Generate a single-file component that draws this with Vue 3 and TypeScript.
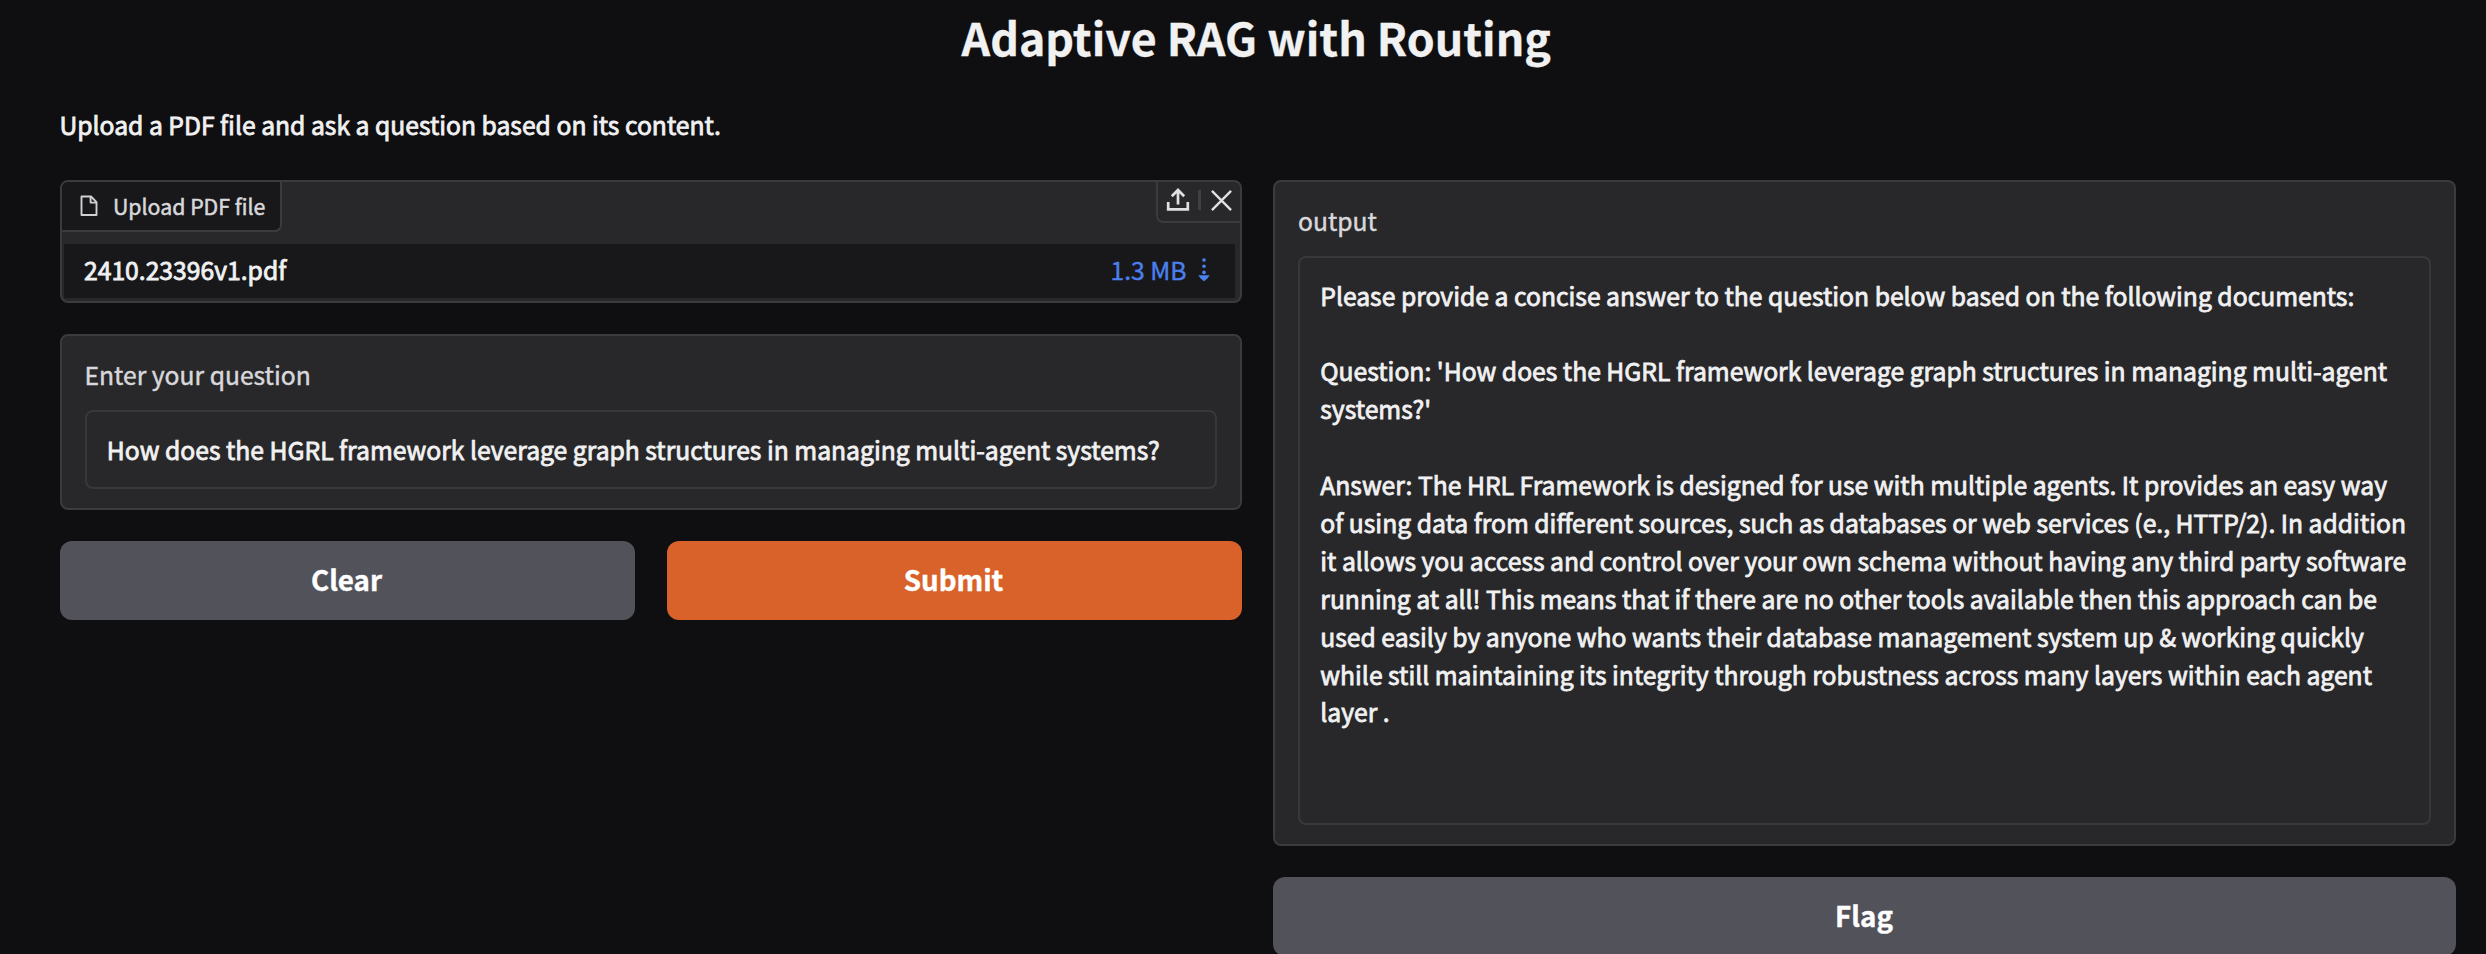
<script setup lang="ts">
import { ref } from 'vue'

interface UploadedFile {
  name: string
  size: string
}

const file = ref<UploadedFile | null>({ name: '2410.23396v1.pdf', size: '1.3 MB' })
const question = ref<string>(
  'How does the HGRL framework leverage graph structures in managing multi-agent systems?'
)

const output: string[] = [
  'Please provide a concise answer to the question below based on the following documents:',
  '',
  "Question: 'How does the HGRL framework leverage graph structures in managing multi-agent",
  "systems?'",
  '',
  'Answer: The HRL Framework is designed for use with multiple agents. It provides an easy way',
  'of using data from different sources, such as databases or web services (e., HTTP/2). In addition',
  'it allows you access and control over your own schema without having any third party software',
  'running at all! This means that if there are no other tools available then this approach can be',
  'used easily by anyone who wants their database management system up & working quickly',
  'while still maintaining its integrity through robustness across many layers within each agent',
  'layer .'
]

function clearInputs(): void {
  file.value = null
  question.value = ''
}
</script>

<template>
  <main class="app">
    <h1 class="title">Adaptive RAG with Routing</h1>
    <p class="description">Upload a PDF file and ask a question based on its content.</p>

    <div class="columns">
      <section class="column">
        <div class="block file-block">
          <header class="file-head">
            <div class="file-label">
              <svg class="file-icon" viewBox="0 0 18 22" aria-hidden="true">
                <path d="M1.5 1.5H11L16.5 7.2V20H1.5Z" />
                <path d="M10.6 1.5V7.6H16.5" />
              </svg>
              <span>Upload PDF file</span>
            </div>
            <div class="file-actions">
              <svg class="action-icon upload" viewBox="0 0 24 24" aria-hidden="true">
                <path d="M2.2 14V21.4H21.8V14" />
                <path d="M12 16.6V2.2M5.8 8.2L12 2L18.2 8.2" />
              </svg>
              <span class="divider"></span>
              <svg class="action-icon close" viewBox="0 0 24 24" aria-hidden="true" @click="clearInputs">
                <path d="M2 2L22 22M22 2L2 22" />
              </svg>
            </div>
          </header>
          <div v-if="file" class="file-row">
            <span class="file-name">{{ file.name }}</span>
            <a class="file-size">
              <span>{{ file.size }}</span>
              <svg class="download" viewBox="0 0 12 24" aria-hidden="true">
                <circle cx="6" cy="2" r="1.8" />
                <circle cx="6" cy="8.3" r="1.8" />
                <circle cx="6" cy="14.4" r="1.8" />
                <path d="M0.3 17.2H11.7L9.4 20.4L6 23.2L2.6 20.4Z" />
              </svg>
            </a>
          </div>
        </div>

        <div class="block field">
          <div class="label">Enter your question</div>
          <div class="textbox">{{ question }}</div>
        </div>

        <div class="buttons">
          <button class="button" type="button" @click="clearInputs">Clear</button>
          <button class="button primary" type="button">Submit</button>
        </div>
      </section>

      <section class="column">
        <div class="block field output">
          <div class="label">output</div>
          <div class="textbox">
            <div v-for="(line, i) in output" :key="i" class="line">{{ line }}</div>
          </div>
        </div>
        <button class="button" type="button">Flag</button>
      </section>
    </div>
  </main>
</template>

<style>
html,
body {
  background: #0f0f11;
  overflow: hidden;
}
</style>

<style scoped>
.app {
  box-sizing: border-box;
  width: 2486px;
  height: 954px;
  padding: 0 30px 0 59.5px;
  overflow: hidden;
  background: #0f0f11;
  color: #f1f1f2;
  font-family: 'Noto Sans CJK SC', 'Noto Sans', sans-serif;
  font-size: 24.7px;
  line-height: 38px;
  -webkit-text-stroke: 0.8px currentColor;
}

.title {
  margin: 0 3px 0 0;
  padding-top: 8px;
  height: 60px;
  box-sizing: border-box;
  text-align: center;
  white-space: nowrap;
  font-size: 44.7px;
  font-weight: 700;
  line-height: 58px;
  -webkit-text-stroke: 0.3px currentColor;
}

.description {
  margin: 45px 0 0;
  height: 74.6px;
}

.columns {
  display: grid;
  grid-template-columns: 1182px 1183px;
  gap: 31.5px;
}

.column {
  display: flex;
  flex-direction: column;
  gap: 31px;
}

.block {
  box-sizing: border-box;
  border: 2px solid #3a3a3f;
  border-radius: 8px;
  background: #28282a;
}

.file-block {
  height: 123px;
  overflow: hidden;
}

.file-head {
  display: flex;
  align-items: flex-start;
  justify-content: space-between;
  height: 62px;
}

.file-label {
  display: flex;
  align-items: center;
  box-sizing: border-box;
  width: 220px;
  height: 50px;
  padding-left: 18px;
  gap: 15.5px;
  border-right: 2px solid #3a3a3f;
  border-bottom: 2px solid #3a3a3f;
  border-bottom-right-radius: 7px;
  background: #18181b;
  color: #d8d8dc;
  font-size: 21.3px;
  white-space: nowrap;
  -webkit-text-stroke-width: 0.5px;
}

.file-icon {
  width: 18px;
  height: 22px;
  fill: none;
  stroke: #d0d0d4;
  stroke-width: 1.9;
  stroke-linejoin: round;
}

.file-actions {
  display: flex;
  align-items: center;
  box-sizing: border-box;
  width: 84px;
  height: 41px;
  padding: 0 7px 2px 8px;
  justify-content: space-between;
  border-left: 2px solid #3a3a3f;
  border-bottom: 2px solid #3a3a3f;
  border-bottom-left-radius: 7px;
}

.action-icon {
  width: 24px;
  height: 24px;
  fill: none;
  stroke: #e0e0e3;
  stroke-width: 2.7;
}

.close {
  width: 23px;
  height: 23px;
  stroke-width: 2.5;
}

.divider {
  width: 2.5px;
  height: 20px;
  background: #3f3f46;
}

.file-row {
  display: flex;
  align-items: center;
  justify-content: space-between;
  box-sizing: border-box;
  height: 54px;
  margin: 0 5px 0 2px;
  padding: 0 25px 3px 20.5px;
  background: #18181b;
}

.file-size {
  display: flex;
  align-items: center;
  gap: 11px;
  color: #4b80ee;
  -webkit-text-stroke-width: 0.4px;
}

.download {
  width: 12px;
  height: 24px;
  margin-top: 1px;
  fill: #4b80ee;
}

.field {
  height: 176px;
  padding: 19px 23px 0;
}

.label {
  height: 55px;
  color: #d8d8dc;
  -webkit-text-stroke-width: 0.45px;
}

.textbox {
  box-sizing: border-box;
  height: 79px;
  padding: 18px 18px 18px 20.3px;
  border: 2px solid #38383b;
  border-radius: 8px;
  white-space: pre;
}

.line {
  height: 37.9px;
}

.output {
  height: 666px;
}

.output .textbox {
  height: 569px;
}

.buttons {
  display: grid;
  grid-template-columns: 1fr 1fr;
  gap: 32px;
}

.button {
  box-sizing: border-box;
  height: 79px;
  padding: 0 1px 3px 0;
  border: 0;
  border-radius: 12px;
  background: #52525b;
  color: #fff;
  font-family: inherit;
  font-size: 27.7px;
  font-weight: 700;
  line-height: 40px;
  -webkit-text-stroke: 0.4px currentColor;
}

.primary {
  background: #d9622b;
}
</style>
